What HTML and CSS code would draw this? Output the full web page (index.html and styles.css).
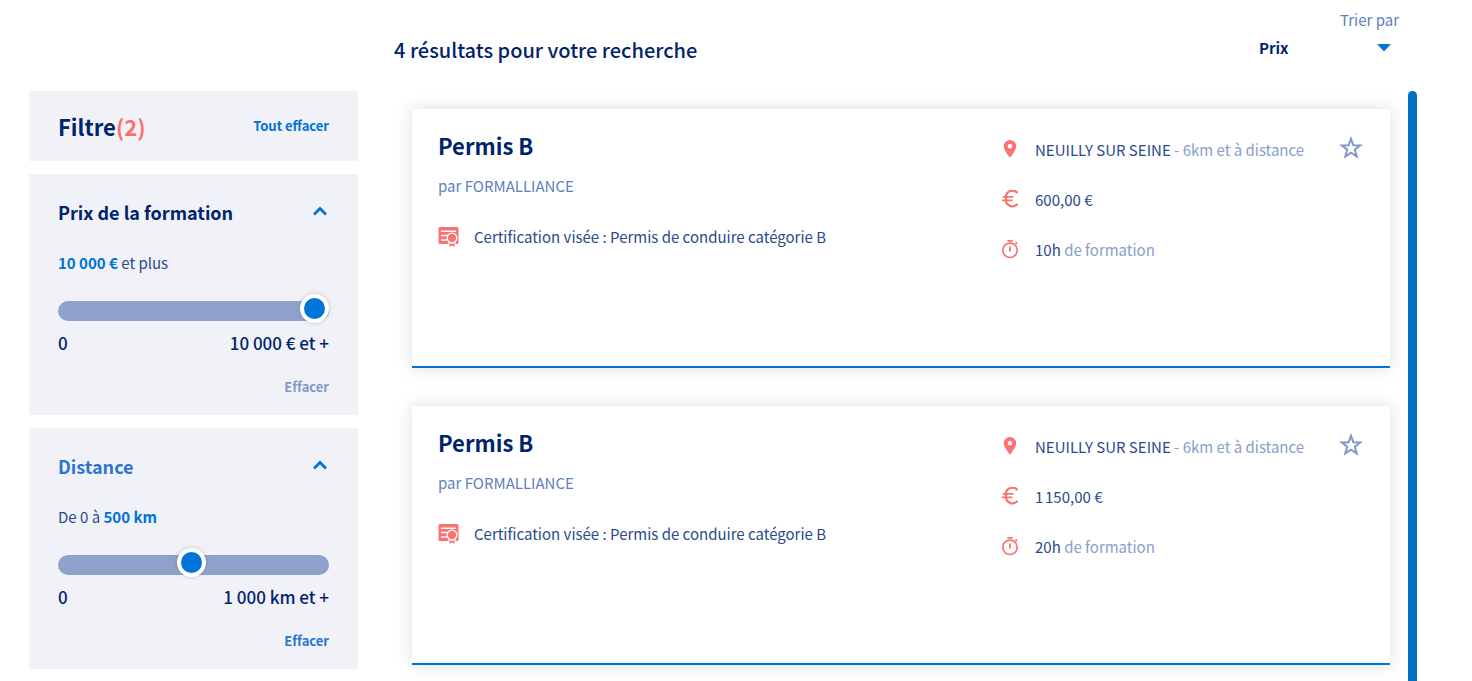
FILE: index.html
```html
<!DOCTYPE html>
<html lang="fr">
<head>
    <meta charset="UTF-8">
    <meta name="viewport" content="width=device-width, initial-scale=1.0">
    <title>Résultats de recherche</title>
    <link rel="stylesheet" href="styles.css">
</head>
<body>
    <svg class="sprite" aria-hidden="true">
        <symbol id="icon-chevron" viewBox="0 0 14 10">
            <path d="M1 8.500L7 2.500l6 6" fill="none" stroke="currentColor" stroke-width="2.800"/>
        </symbol>
        <symbol id="icon-certif" viewBox="0 0 20 20">
            <path d="M1.500 0h17A1.500 1.500 0 0 1 20 1.500v14a1.500 1.500 0 0 1-1.500 1.500h-17A1.500 1.500 0 0 1 0 15.500v-14A1.500 1.500 0 0 1 1.500 0z" fill="currentColor"/>
            <path d="M2.500 4.200h15M2.500 8.600h7M2.500 12.900h6" stroke="#fff" stroke-width="1.500"/>
            <circle cx="13.500" cy="11" r="5.500" fill="#fff"/>
            <path d="M10 14h7v4h-7z" fill="#fff"/>
            <circle cx="13.500" cy="11" r="4.200" fill="currentColor"/>
            <path d="M11 16l2.500 1 2.500-1v4l-2.500-1.500L11 20z" fill="currentColor"/>
        </symbol>
        <symbol id="icon-pin" viewBox="0 0 20 20">
            <path d="M10 0a6.200 6.200 0 0 0-6.200 6.200C3.800 10.800 10 17.500 10 17.500s6.200-6.700 6.200-11.300A6.200 6.200 0 0 0 10 0zm0 8.500a2.300 2.300 0 1 1 0-4.600 2.300 2.300 0 0 1 0 4.600z" fill="currentColor"/>
        </symbol>
        <symbol id="icon-euro" viewBox="0 0 20 20">
            <path d="M17.500 3A6.600 6.600 0 0 0 6 8.500a6.600 6.600 0 0 0 11.500 5.500" fill="none" stroke="currentColor" stroke-width="2.200"/>
            <path d="M2.800 6.800h10.700M1.800 10.300h10.700" stroke="currentColor" stroke-width="1.800"/>
        </symbol>
        <symbol id="icon-timer" viewBox="0 0 20 20">
            <circle cx="10" cy="10.300" r="7.200" fill="none" stroke="currentColor" stroke-width="1.700"/>
            <path d="M7.300.900h5.400M10 6.500v5M15.500 4l1.500-1.500" stroke="currentColor" stroke-width="1.800"/>
        </symbol>
        <symbol id="icon-star" viewBox="0 0 24 24">
            <path d="M12 3.500l2.200 6 6.300.200-5 3.900 1.800 6.200-5.300-3.500-5.300 3.500 1.800-6.200-5-3.900 6.300-.200z" fill="none" stroke="currentColor" stroke-width="1.800"/>
        </symbol>
    </svg>

    <div class="page">
        <aside class="sidebar">
            <div class="panel panel-head">
                <h2>Filtre<span class="count">(2)</span></h2>
                <button type="button" class="link-btn clear-all">Tout effacer</button>
            </div>

            <section class="panel">
                <button type="button" class="panel-title" aria-expanded="true">
                    Prix de la formation
                    <svg class="chevron"><use href="#icon-chevron"/></svg>
                </button>
                <label class="range-label" for="prix"><strong>10&nbsp;000&nbsp;€</strong> et plus</label>
                <input type="range" id="prix" min="0" max="10000" step="100" value="10000">
                <div class="bounds"><span>0</span><span>10&nbsp;000&nbsp;€ et +</span></div>
                <button type="button" class="link-btn clear muted">Effacer</button>
            </section>

            <section class="panel">
                <button type="button" class="panel-title active" aria-expanded="true">
                    Distance
                    <svg class="chevron"><use href="#icon-chevron"/></svg>
                </button>
                <label class="range-label" for="distance">De 0 à <strong>500 km</strong></label>
                <input type="range" id="distance" min="0" max="1020" step="10" value="500">
                <div class="bounds"><span>0</span><span>1&nbsp;000 km et +</span></div>
                <button type="button" class="link-btn clear">Effacer</button>
            </section>
        </aside>

        <main class="content">
            <header class="toolbar">
                <h1>4 résultats pour votre recherche</h1>
                <div class="sort">
                    <label for="tri">Trier par</label>
                    <div class="select-wrap">
                        <select id="tri">
                            <option>Prix</option>
                        </select>
                        <svg class="caret" viewBox="0 0 14 8"><path d="M0 0h14L7 7.500z" fill="currentColor"/></svg>
                    </div>
                </div>
            </header>

            <div class="results">
                <div class="list">
                    <article class="card">
                        <div class="summary">
                            <h2>Permis B</h2>
                            <p class="school">par FORMALLIANCE</p>
                            <p class="certif"><svg class="icon"><use href="#icon-certif"/></svg>Certification visée&nbsp;: Permis de conduire catégorie B</p>
                        </div>
                        <ul class="details">
                            <li><svg class="icon"><use href="#icon-pin"/></svg><span>NEUILLY SUR SEINE <span class="light">- 6km et à distance</span></span></li>
                            <li><svg class="icon"><use href="#icon-euro"/></svg><span>600,00&nbsp;€</span></li>
                            <li><svg class="icon"><use href="#icon-timer"/></svg><span>10h <span class="light">de formation</span></span></li>
                        </ul>
                        <button type="button" class="favorite" aria-label="Ajouter aux favoris"><svg><use href="#icon-star"/></svg></button>
                    </article>

                    <article class="card">
                        <div class="summary">
                            <h2>Permis B</h2>
                            <p class="school">par FORMALLIANCE</p>
                            <p class="certif"><svg class="icon"><use href="#icon-certif"/></svg>Certification visée&nbsp;: Permis de conduire catégorie B</p>
                        </div>
                        <ul class="details">
                            <li><svg class="icon"><use href="#icon-pin"/></svg><span>NEUILLY SUR SEINE <span class="light">- 6km et à distance</span></span></li>
                            <li><svg class="icon"><use href="#icon-euro"/></svg><span>1&#8239;150,00&nbsp;€</span></li>
                            <li><svg class="icon"><use href="#icon-timer"/></svg><span>20h <span class="light">de formation</span></span></li>
                        </ul>
                        <button type="button" class="favorite" aria-label="Ajouter aux favoris"><svg><use href="#icon-star"/></svg></button>
                    </article>
                </div>
                <div class="scrollbar"></div>
            </div>
        </main>
    </div>
</body>
</html>
```
FILE: styles.css
```css
* {
    box-sizing: border-box;
}
body {
    margin: 0;
    background: #fff;
    color: #2b4a8b;
    font-family: "Noto Sans CJK SC", "Open Sans", sans-serif;
    font-size: 15px;
    line-height: 24px;
}
h1, h2, p, ul {
    margin: 0;
    padding: 0;
}
button, select {
    padding: 0;
    border: none;
    background: none;
    font-family: inherit;
    cursor: pointer;
}
.sprite {
    position: absolute;
    width: 0;
    height: 0;
}
.page {
    display: flex;
    height: 100vh;
    overflow: hidden;
    padding: 0 55px 0 29px;
}

/* filtres */
.sidebar {
    display: flex;
    flex-direction: column;
    flex: 0 0 329px;
    gap: 13px;
    padding-top: 91px;
}
.panel {
    display: flex;
    flex-direction: column;
    padding: 24px 29px 16px;
    background: #f1f2f8;
}
.panel-head {
    flex-direction: row;
    align-items: center;
    justify-content: space-between;
    height: 70px;
    padding-top: 0;
    padding-bottom: 0;
}
.panel-head h2 {
    color: #00246c;
    font-size: 22px;
    line-height: 32px;
}
.count {
    color: #f8736f;
}
.link-btn {
    color: #0073d8;
    font-size: 13px;
    font-weight: 700;
    line-height: 24px;
}
.panel-title {
    display: flex;
    align-items: center;
    justify-content: space-between;
    color: #00246c;
    font-size: 18px;
    font-weight: 700;
    line-height: 28px;
}
.panel-title.active {
    color: #2b74cf;
}
.chevron {
    width: 14px;
    height: 10px;
    margin: 0 2px 2px 0;
    color: #0073d8;
}
.range-label {
    margin: 25px 0 26px;
}
.range-label strong {
    color: #0073d8;
}
input[type="range"] {
    appearance: none;
    width: 100%;
    height: 20px;
    margin: 0;
    border-radius: 10px;
    background: #8fa2cb;
    cursor: pointer;
}
input[type="range"]::-webkit-slider-runnable-track {
    height: 20px;
}
input[type="range"]::-webkit-slider-thumb {
    appearance: none;
    width: 29px;
    height: 29px;
    margin-top: -7px;
    border: 4px solid #fff;
    border-radius: 50%;
    background: #0074d9;
    box-shadow: 0 0 4px rgba(60, 100, 120, 0.3);
}
.bounds {
    display: flex;
    justify-content: space-between;
    margin: 8px 0 18px;
    color: #00246c;
    font-size: 17px;
    font-weight: 500;
    line-height: 28px;
}
.clear {
    align-self: flex-end;
    color: #2b74cf;
    font-variant-ligatures: none;
}
.clear.muted {
    color: #8498c5;
}

/* resultats */
.content {
    display: flex;
    flex: 1;
    flex-direction: column;
    min-width: 0;
}
.toolbar {
    display: flex;
    flex: 0 0 91px;
    justify-content: space-between;
    padding: 8px 18px 0 36px;
}
h1 {
    margin-top: 26px;
    color: #00246c;
    font-size: 20px;
    font-weight: 500;
    line-height: 32px;
}
.sort {
    display: flex;
    flex-direction: column;
    align-items: flex-end;
    gap: 3px;
    color: #5f80bd;
}
.select-wrap {
    position: relative;
    width: 140px;
}
select {
    appearance: none;
    width: 100%;
    height: 24px;
    color: #00246c;
    font-size: 15px;
    font-weight: 700;
}
.caret {
    position: absolute;
    top: 9px;
    right: 8px;
    width: 14px;
    height: 8px;
    color: #0073d8;
    pointer-events: none;
}
.results {
    display: flex;
    flex: 1;
    min-height: 0;
}
.list {
    display: flex;
    flex: 1;
    flex-direction: column;
    gap: 38px;
    overflow: hidden;
    padding: 18px 18px 0 54px;
}
.scrollbar {
    width: 9px;
    border-radius: 5px 5px 0 0;
    background: #006fc6;
}
.card {
    display: flex;
    flex: 0 0 259px;
    padding: 19px 26px;
    border-bottom: 2px solid #0073d8;
    background: #fff;
    box-shadow: 0 0 16px rgba(60, 100, 115, 0.2);
}
.summary {
    flex: 1;
}
.card h2 {
    color: #00246c;
    font-size: 22px;
    line-height: 34px;
}
.school {
    margin: 12px 0 27px;
    color: #5f80bd;
}
.certif, .details li {
    display: flex;
    align-items: center;
    gap: 15px;
}
.icon {
    flex: none;
    width: 20px;
    height: 20px;
    color: #fa7370;
}
.certif .icon {
    width: 21px;
}
.details {
    display: flex;
    flex: 0 0 338px;
    flex-direction: column;
    gap: 26px;
    padding-top: 10px;
    list-style: none;
}
.light {
    color: #889ecb;
}
.favorite {
    width: 26px;
    height: 26px;
    margin-top: 7px;
    color: #7f95c6;
}
.favorite svg {
    display: block;
    width: 26px;
    height: 26px;
}
```
